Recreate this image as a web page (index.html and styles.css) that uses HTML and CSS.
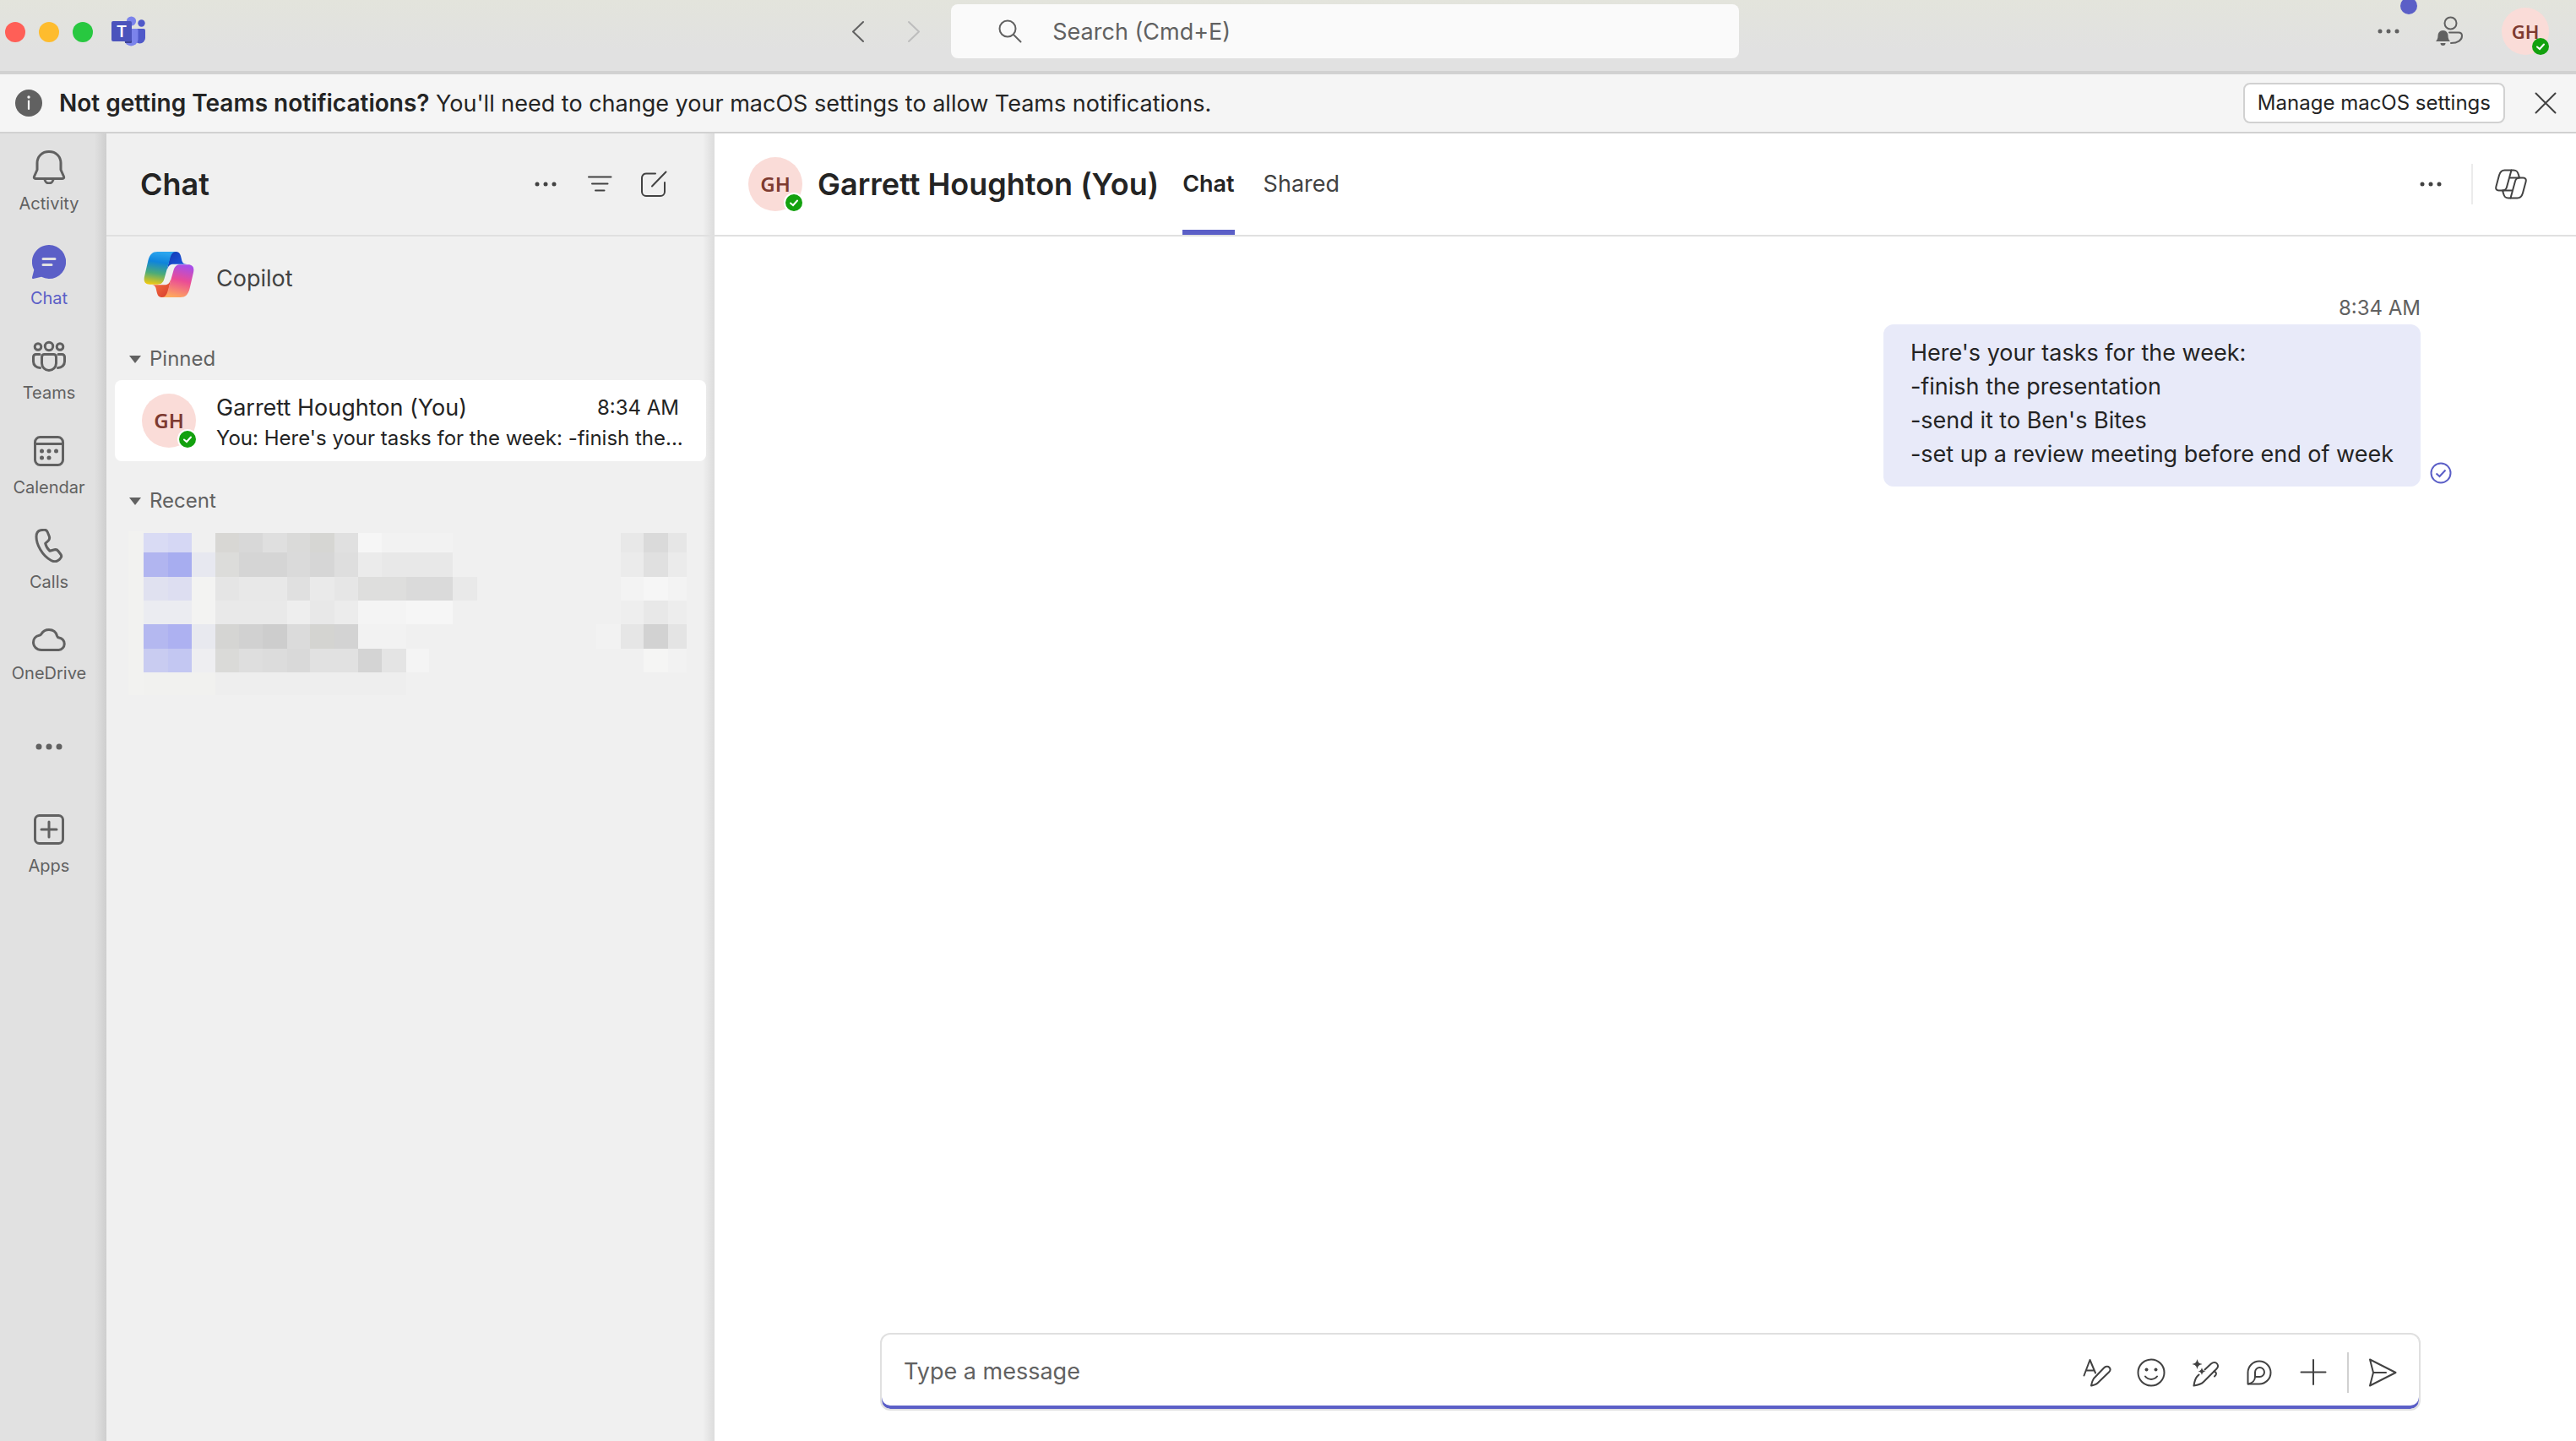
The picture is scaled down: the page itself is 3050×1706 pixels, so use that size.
FILE: index.html
```
<!DOCTYPE html>
<html lang="en">
<head>
    <meta charset="UTF-8">
    <meta name="viewport" content="width=device-width, initial-scale=1.0">
    <title>Chat | Microsoft Teams</title>
    <link rel="stylesheet" href="styles.css">
</head>
<body>

<div class="app">

    <!-- Title bar -->
    <header class="titlebar">
        <div class="titlebar-left">
            <span class="light light-close"></span>
            <span class="light light-min"></span>
            <span class="light light-max"></span>
            <svg class="teams-logo" width="42" height="38" viewBox="0 0 42 38">
                <circle cx="36.500" cy="8.500" r="4.200" fill="#5059c9"/>
                <path d="M28 15h11a2 2 0 0 1 2 2v9a6.500 6.500 0 0 1-13 0z" fill="#5059c9"/>
                <circle cx="24.500" cy="6" r="5.600" fill="#7b83eb"/>
                <path d="M16 15h15a1.500 1.500 0 0 1 1.500 1.500V28a8.300 8.300 0 0 1-16.500 0z" fill="#7b83eb"/>
                <path d="M17 9h8v22a1 1 0 0 1-1 1h-7z" fill="#3d4494"/>
                <rect x="1" y="6" width="24" height="24" rx="2" fill="#4b53bc"/>
                <text class="teams-logo-letter" x="13" y="25" text-anchor="middle">T</text>
            </svg>
        </div>
        <div class="titlebar-center">
            <button class="icon-button" aria-label="Back">
                <svg width="32" height="32" viewBox="0 0 32 32" class="line"><path d="M22 5L10 16.500L22 28"/></svg>
            </button>
            <button class="icon-button disabled" aria-label="Forward">
                <svg width="32" height="32" viewBox="0 0 32 32" class="line"><path d="M10 5L22 16.500L10 28"/></svg>
            </button>
            <label class="search">
                <svg width="28" height="28" viewBox="0 0 28 28" class="line"><circle cx="11" cy="11" r="9.500"/><path d="M18 18L26.500 26.500"/></svg>
                <input type="text" placeholder="Search (Cmd+E)" aria-label="Search">
            </label>
        </div>
        <div class="titlebar-right">
            <button class="icon-button more-button" aria-label="Settings and more">
                <svg width="28" height="8" viewBox="0 0 28 8" fill="currentColor"><circle cx="4" cy="4" r="2.500"/><circle cx="14" cy="4" r="2.500"/><circle cx="24" cy="4" r="2.500"/></svg>
                <span class="update-dot"></span>
            </button>
            <button class="icon-button" aria-label="Notify when available">
                <svg width="32" height="36" viewBox="0 0 32 36" class="line">
                    <circle cx="17.500" cy="8.500" r="7"/>
                    <path d="M16 19.500h11c3 0 4 1.500 4 4c0 5-5 8.500-13 8.500"/>
                    <path class="solid" d="M8.500 17c-4 0-6 3-6 6.500c0 3-1 5-2.500 6.500h17c-1.500-1.500-2.500-3.500-2.500-6.500c0-3.500-2-6.500-6-6.500z"/>
                    <path class="solid" d="M5.500 32h6a3 3 0 0 1-6 0z"/>
                </svg>
            </button>
            <button class="avatar avatar-small" aria-label="Account">
                <span>GH</span>
                <svg class="presence" width="24" height="24" viewBox="0 0 24 24"><circle cx="12" cy="12" r="10"/><path d="M8 12.500L11 15L16 9.500"/></svg>
            </button>
        </div>
    </header>

    <!-- Notification banner -->
    <div class="banner">
        <svg width="32" height="32" viewBox="0 0 32 32"><circle cx="16" cy="16" r="16" fill="#616161"/><circle cx="16" cy="9" r="1.700" fill="#f5f5f5"/><path d="M16 13.500V23" stroke="#f5f5f5" stroke-width="2.200" stroke-linecap="round"/></svg>
        <p><strong>Not getting Teams notifications?</strong> You'll need to change your macOS settings to allow Teams notifications.</p>
        <button class="banner-action">Manage macOS settings</button>
        <button class="icon-button" aria-label="Dismiss">
            <svg width="32" height="32" viewBox="0 0 32 32" class="line"><path d="M4.500 4.500L27.500 27.500M27.500 4.500L4.500 27.500"/></svg>
        </button>
    </div>

    <div class="workspace">

        <!-- App rail -->
        <nav class="rail">
            <a href="#" class="rail-item">
                <svg width="40" height="40" viewBox="0 0 40 40" class="line"><path d="M20 1.500C11.500 1.500 6 7.500 6 15V23L2.500 31C2 32.500 2.500 33.500 4 33.500H36C37.500 33.500 38 32.500 37.500 31L34 23V15C34 7.500 28.500 1.500 20 1.500Z"/><path d="M15 34a5 5 0 0 0 10 0"/></svg>
                <span>Activity</span>
            </a>
            <a href="#" class="rail-item active">
                <svg width="40" height="40" viewBox="0 0 40 40"><path d="M20 0a20 20 0 1 1-9 37.800L1.500 40c-1 .2-1.700-.5-1.500-1.500l2.300-9A20 20 0 0 1 20 0z" fill="#5b5fc7"/><path d="M13 16.500h14M13 23.500h10" stroke="#e1e1e1" stroke-width="3" stroke-linecap="round"/></svg>
                <span>Chat</span>
            </a>
            <a href="#" class="rail-item">
                <svg width="40" height="40" viewBox="0 0 40 40" class="line"><circle cx="20" cy="8" r="4.700"/><circle cx="7" cy="8.500" r="3.800"/><circle cx="33" cy="8.500" r="3.800"/><path d="M14.500 17.500h11a3 3 0 0 1 3 3V28a8.500 8.500 0 0 1-17 0v-7.500a3 3 0 0 1 3-3z"/><path d="M9 17.500H4.500a3 3 0 0 0-3 3V26c0 4.500 3.500 7.500 8 7.500M31 17.500h4.500a3 3 0 0 1 3 3V26c0 4.500-3.500 7.500-8 7.500"/></svg>
                <span>Teams</span>
            </a>
            <a href="#" class="rail-item">
                <svg width="40" height="40" viewBox="0 0 40 40" class="line"><rect x="3.500" y="3.500" width="33" height="33" rx="6"/><path d="M3.500 11.500H36.500"/><g class="dots"><circle cx="11.500" cy="20" r="2.500"/><circle cx="20" cy="20" r="2.500"/><circle cx="28.500" cy="20" r="2.500"/><circle cx="11.500" cy="28" r="2.500"/><circle cx="20" cy="28" r="2.500"/></g></svg>
                <span>Calendar</span>
            </a>
            <a href="#" class="rail-item">
                <svg width="40" height="40" viewBox="0 0 40 40" class="line"><path d="M10 1.800L14 1.200C16 1 17.500 2 18.300 4L20.300 9C21 11 20.700 12.500 19.300 14L15.700 17.300C16.500 20.800 18.500 24 21 26.300L26.500 24.800C28.300 24.300 29.700 24.800 30.800 26.200L33.700 30C35 31.700 35 33.500 33.500 35L32 36.700C29.500 39 26 39.300 22.500 37.500C12 32 5 18.500 5 9.500C5 5 6.500 2.500 10 1.800Z"/></svg>
                <span>Calls</span>
            </a>
            <a href="#" class="rail-item">
                <svg width="40" height="36" viewBox="0 0 40 36" class="line"><path d="M11 31.500H31.500a7.300 7.300 0 0 0 .5-14.500c-1.500-.2-2-.7-2.400-2C28.300 10 24.800 7.500 20 7.500c-4.500 0-7.300 2-9 5c-.7 1.200-1.300 1.600-2.600 1.800C4 15 1.500 18.500 1.500 22.500c0 5 4 9 9.500 9z"/></svg>
                <span>OneDrive</span>
            </a>
            <button class="rail-more" aria-label="More apps">
                <svg width="32" height="8" viewBox="0 0 32 8" fill="currentColor"><circle cx="4" cy="4" r="3.500"/><circle cx="16" cy="4" r="3.500"/><circle cx="28" cy="4" r="3.500"/></svg>
            </button>
            <a href="#" class="rail-item">
                <svg width="40" height="40" viewBox="0 0 40 40" class="line"><rect x="3.500" y="3.500" width="33" height="33" rx="5"/><path d="M20 11V29M11 20H29"/></svg>
                <span>Apps</span>
            </a>
        </nav>

        <!-- Chat list -->
        <aside class="chat-list">
            <div class="list-header">
                <h1>Chat</h1>
                <button class="icon-button" aria-label="More options">
                    <svg width="32" height="32" viewBox="0 0 32 32" fill="currentColor"><circle cx="6" cy="16" r="2.500"/><circle cx="16" cy="16" r="2.500"/><circle cx="26" cy="16" r="2.500"/></svg>
                </button>
                <button class="icon-button" aria-label="Filter">
                    <svg width="32" height="32" viewBox="0 0 32 32" class="line"><path d="M3 7.500H29.500M7 15.500H25.500M11 23.500H21.500"/></svg>
                </button>
                <button class="icon-button" aria-label="New chat">
                    <svg width="32" height="32" viewBox="0 0 32 32" class="line"><path d="M18 3.500H7A5 5 0 0 0 2 8.500V25A5 5 0 0 0 7 30H24A5 5 0 0 0 29 25V14"/><path d="M30.500 1.500L14 18.500"/></svg>
                </button>
            </div>

            <a href="#" class="copilot">
                <svg width="60" height="54" viewBox="0 0 59 54">
                    <defs>
                        <linearGradient id="cool" x1=".4" y1="0" x2=".25" y2="1">
                            <stop offset="0" stop-color="#2aa5ee"/>
                            <stop offset=".3" stop-color="#0f84dc"/>
                            <stop offset=".65" stop-color="#4bab79"/>
                            <stop offset="1" stop-color="#f2c90f"/>
                        </linearGradient>
                        <linearGradient id="warm" x1=".6" y1="0" x2=".35" y2="1">
                            <stop offset="0" stop-color="#a94ee8"/>
                            <stop offset=".45" stop-color="#ea4c96"/>
                            <stop offset="1" stop-color="#ffaa5c"/>
                        </linearGradient>
                        <linearGradient id="navy" x1="0" y1="0" x2="1" y2="1">
                            <stop offset="0" stop-color="#1436b0"/>
                            <stop offset="1" stop-color="#1b62ea"/>
                        </linearGradient>
                        <linearGradient id="ember" x1="0" y1="0" x2="1" y2="1">
                            <stop offset="0" stop-color="#fb7a45"/>
                            <stop offset="1" stop-color="#d63a2c"/>
                        </linearGradient>
                    </defs>
                    <path fill="url(#navy)" d="M32 0H38C42.500 0 43.500 4 44.500 9C45.300 13 46.500 14.700 51 14.700H35C31 14.700 29 16 27 22Z"/>
                    <path fill="url(#cool)" d="M16 0H38C34 0 32 3 30.500 9L24 32C22.500 37 20 38.700 16 38.700H7C1 38.700-.8 35 .6 29L5 10C7 3 10 0 16 0Z"/>
                    <path fill="url(#ember)" d="M27 54H21C16.500 54 15.500 50 14.500 45C13.700 41 12.500 39.300 8 39.300H24C28 39.300 30 38 32 32Z"/>
                    <path fill="url(#warm)" d="M43 54H21C25 54 27 51 28.500 45L35 22C36.500 17 39 15.300 43 15.300H52C58 15.300 59.800 19 58.400 25L54 44C52 51 49 54 43 54Z"/>
                </svg>
                <span>Copilot</span>
            </a>

            <h2 class="section-title"><span class="caret"></span>Pinned</h2>
            <a href="#" class="chat-item">
                <div class="avatar">
                    <span>GH</span>
                    <svg class="presence" width="24" height="24" viewBox="0 0 24 24"><circle class="ring" cx="12" cy="12" r="12"/><circle cx="12" cy="12" r="10"/><path d="M8 12.500L11 15L16 9.500"/></svg>
                </div>
                <div class="chat-text">
                    <div class="chat-top">
                        <span class="chat-name">Garrett Houghton (You)</span>
                        <time>8:34 AM</time>
                    </div>
                    <div class="chat-preview">You: Here's your tasks for the week: -finish the...</div>
                </div>
            </a>

            <h2 class="section-title recent-title"><span class="caret"></span>Recent</h2>
            <!-- Redacted conversations -->
            <svg class="redacted" width="661" height="196" viewBox="0 0 664 196" preserveAspectRatio="none" shape-rendering="crispEdges">
                <rect x="0" y="0" width="18" height="194" fill="#f2f2f0"/>
                <g>
                    <rect x="18" y="2" width="29" height="23" fill="#d9dbf4"/><rect x="47" y="2" width="28" height="23" fill="#d5d7f4"/>
                    <rect x="18" y="25" width="29" height="29" fill="#b1b5f0"/><rect x="47" y="25" width="28" height="29" fill="#a7adf0"/><rect x="75" y="25" width="28" height="29" fill="#e7e8f0"/>
                    <rect x="18" y="54" width="29" height="28" fill="#e0e1f0"/><rect x="47" y="54" width="28" height="28" fill="#dddef1"/><rect x="75" y="54" width="28" height="56" fill="#f3f3f2"/>
                    <rect x="18" y="82" width="57" height="28" fill="#ebecf1"/>
                    <rect x="18" y="110" width="29" height="29" fill="#b4b8f0"/><rect x="47" y="110" width="28" height="29" fill="#adb1f1"/><rect x="75" y="110" width="28" height="29" fill="#e8e9ef"/>
                    <rect x="18" y="139" width="29" height="28" fill="#c9ccf1"/><rect x="47" y="139" width="28" height="28" fill="#c3c7f2"/><rect x="75" y="139" width="28" height="28" fill="#eeeef1"/>
                    <rect x="18" y="167" width="85" height="27" fill="#f1f1ef"/>
                </g>
                <g>
                    <rect x="103" y="2" width="29" height="23" fill="#d8d7d4"/><rect x="132" y="2" width="28" height="23" fill="#d8d8d8"/><rect x="160" y="2" width="29" height="23" fill="#dfdfdf"/><rect x="189" y="2" width="27" height="23" fill="#dadad9"/><rect x="216" y="2" width="29" height="23" fill="#d6d6d3"/><rect x="245" y="2" width="28" height="23" fill="#e0e0e0"/><rect x="273" y="2" width="28" height="23" fill="#f6f6f6"/><rect x="301" y="2" width="85" height="23" fill="#f2f2f2"/>
                    <rect x="103" y="25" width="29" height="29" fill="#dcdcda"/><rect x="132" y="25" width="57" height="29" fill="#d5d5d5"/><rect x="189" y="25" width="27" height="29" fill="#dadada"/><rect x="216" y="25" width="29" height="29" fill="#d6d6d6"/><rect x="245" y="25" width="28" height="29" fill="#dedede"/><rect x="273" y="25" width="28" height="29" fill="#ebebeb"/><rect x="301" y="25" width="85" height="29" fill="#e8e8e8"/>
                    <rect x="103" y="54" width="29" height="28" fill="#e5e5e5"/><rect x="132" y="54" width="57" height="28" fill="#e8e8e8"/><rect x="189" y="54" width="27" height="28" fill="#e0e0e0"/><rect x="216" y="54" width="29" height="28" fill="#eaeaea"/><rect x="245" y="54" width="28" height="28" fill="#e6e6e6"/><rect x="273" y="54" width="57" height="28" fill="#dededd"/><rect x="330" y="54" width="56" height="28" fill="#dadada"/><rect x="386" y="54" width="29" height="28" fill="#e9e9e9"/>
                    <rect x="103" y="82" width="86" height="28" fill="#e9e9e9"/><rect x="189" y="82" width="27" height="28" fill="#eeeeee"/><rect x="216" y="82" width="29" height="28" fill="#e8e8e8"/><rect x="245" y="82" width="28" height="28" fill="#ececec"/><rect x="273" y="82" width="57" height="28" fill="#f4f4f4"/><rect x="330" y="82" width="56" height="28" fill="#f6f6f6"/>
                    <rect x="103" y="110" width="29" height="29" fill="#d5d5d3"/><rect x="132" y="110" width="28" height="29" fill="#d1d1d1"/><rect x="160" y="110" width="29" height="29" fill="#cdcdcd"/><rect x="189" y="110" width="27" height="29" fill="#dbdbdb"/><rect x="216" y="110" width="29" height="29" fill="#d4d4d1"/><rect x="245" y="110" width="28" height="29" fill="#d3d3d3"/><rect x="273" y="110" width="57" height="29" fill="#f2f2f2"/>
                    <rect x="103" y="139" width="29" height="28" fill="#dadad8"/><rect x="132" y="139" width="28" height="28" fill="#dedede"/><rect x="160" y="139" width="29" height="28" fill="#dcdcdc"/><rect x="189" y="139" width="27" height="28" fill="#d9d9d9"/><rect x="216" y="139" width="57" height="28" fill="#e1e1e1"/><rect x="273" y="139" width="28" height="28" fill="#d4d4d4"/><rect x="301" y="139" width="29" height="28" fill="#e4e4e4"/><rect x="330" y="139" width="28" height="28" fill="#f4f4f4"/>
                    <rect x="103" y="167" width="227" height="27" fill="#eeeeee"/>
                </g>
                <g>
                    <rect x="586" y="2" width="27" height="23" fill="#e8e8e8"/><rect x="613" y="2" width="29" height="23" fill="#dadada"/><rect x="642" y="2" width="22" height="23" fill="#e6e6e6"/>
                    <rect x="586" y="25" width="27" height="29" fill="#ebebeb"/><rect x="613" y="25" width="29" height="29" fill="#e0e0e0"/><rect x="642" y="25" width="22" height="29" fill="#ebebeb"/>
                    <rect x="586" y="54" width="27" height="28" fill="#f3f3f3"/><rect x="613" y="54" width="29" height="28" fill="#f6f6f6"/><rect x="642" y="54" width="22" height="28" fill="#f3f3f3"/>
                    <rect x="586" y="82" width="27" height="28" fill="#eeeeee"/><rect x="613" y="82" width="29" height="28" fill="#e8e8e8"/><rect x="642" y="82" width="22" height="28" fill="#ededed"/>
                    <rect x="557" y="110" width="29" height="29" fill="#f2f2f2"/><rect x="586" y="110" width="27" height="29" fill="#e6e6e6"/><rect x="613" y="110" width="29" height="29" fill="#d2d2d2"/><rect x="642" y="110" width="22" height="29" fill="#e4e4e4"/>
                    <rect x="613" y="139" width="29" height="28" fill="#f5f5f4"/><rect x="642" y="139" width="22" height="28" fill="#f2f2f2"/>
                </g>
            </svg>
        </aside>

        <!-- Conversation -->
        <main class="conversation">
            <div class="conversation-header">
                <div class="avatar">
                    <span>GH</span>
                    <svg class="presence" width="24" height="24" viewBox="0 0 24 24"><circle class="ring" cx="12" cy="12" r="12"/><circle cx="12" cy="12" r="10"/><path d="M8 12.500L11 15L16 9.500"/></svg>
                </div>
                <h2>Garrett Houghton (You)</h2>
                <div class="tabs">
                    <button class="tab active">Chat</button>
                    <button class="tab">Shared</button>
                </div>
                <button class="icon-button" aria-label="More chat options">
                    <svg width="32" height="32" viewBox="0 0 32 32" fill="currentColor"><circle cx="6" cy="16" r="2.500"/><circle cx="16" cy="16" r="2.500"/><circle cx="26" cy="16" r="2.500"/></svg>
                </button>
                <span class="divider"></span>
                <button class="icon-button" aria-label="Open Copilot">
                    <svg width="38" height="36" viewBox="0 0 38 36" class="line">
                        <path d="M11.500 1.500H19.500L14 21.500C13.300 24.200 12 25.500 9 25.500H4.500C1.500 25.500 .7 23.300 1.500 20.500L5 7.500C6.200 3.200 8 1.500 11.500 1.500Z"/>
                        <path d="M19.500 1.500H22C26 1.500 27 3.500 28 7L29 10.500M18 10.500H29"/>
                        <path d="M26.500 34.500H18.500L24 14.500C24.700 11.800 26 10.500 29 10.500H33.500C36.500 10.500 37.300 12.700 36.500 15.500L33 28.500C31.800 32.800 30 34.500 26.500 34.500Z"/>
                        <path d="M18.500 34.500H16C12 34.500 11 32.500 10 29L9 25.500H20"/>
                    </svg>
                </button>
            </div>

            <div class="messages">
                <div class="message">
                    <time>8:34 AM</time>
                    <div class="bubble">
                        <p>Here's your tasks for the week:</p>
                        <p>-finish the presentation</p>
                        <p>-send it to Ben's Bites</p>
                        <p>-set up a review meeting before end of week</p>
                    </div>
                    <svg class="sent" width="26" height="26" viewBox="0 0 26 26"><circle cx="13" cy="13" r="11.500"/><path d="M7.500 13.500L11.500 17L18.500 9.500"/></svg>
                </div>
            </div>

            <div class="composer">
                <input type="text" placeholder="Type a message" aria-label="Type a message">
                <button class="icon-button" aria-label="Format">
                    <svg width="34" height="34" viewBox="0 0 34 34" class="line"><path d="M1.500 20.500L8.500 2L15 17.500M4 14.500H13"/><path d="M25 11.500C27 9.500 30 9.300 31.500 11C33 12.700 32.500 15 31 16.500L17.500 29.500C15.500 31.500 12.500 32 10 32.500C10.500 30 11 27 13 24Z"/></svg>
                </button>
                <button class="icon-button" aria-label="Emoji">
                    <svg width="34" height="34" viewBox="0 0 34 34" class="line"><circle cx="17" cy="17" r="15.500"/><path d="M10 21.500C13.500 26 20.500 26 24 21.500"/><g class="dots"><circle cx="11.500" cy="13.500" r="2"/><circle cx="22.500" cy="13.500" r="2"/></g></svg>
                </button>
                <button class="icon-button" aria-label="Rewrite with Copilot">
                    <svg width="34" height="34" viewBox="0 0 34 34" class="line"><path class="solid" d="M7.500 1C8.500 5 9.500 6 13.500 7C9.500 8 8.500 9 7.500 13C6.500 9 5.500 8 1.500 7C5.500 6 6.500 5 7.500 1Z"/><path class="solid" d="M13 11C13.700 14 14.500 14.800 17.500 15.500C14.500 16.200 13.700 17 13 20C12.300 17 11.500 16.200 8.500 15.500C11.500 14.800 12.300 14 13 11Z"/><path d="M16.500 13.500L24 6.500C26.500 4.500 29.500 4.500 31 6.500C32.500 8.500 32 11 30.500 12.500L15 28C12 31 7 32 3.500 32.500C4 29 4.500 25 7.500 21.500L9.500 19.500"/><path d="M27.500 15.500C31 17 30.500 19 28 21.500"/></svg>
                </button>
                <button class="icon-button" aria-label="Loop components">
                    <svg width="34" height="34" viewBox="0 0 34 34" class="line"><path d="M3.500 17A13.500 13.500 0 1 1 17 30.500H3.500Z"/><path d="M12 22V16.500A5.500 5.500 0 1 1 17.500 22H12C12 26 9 29.500 4 30.500"/></svg>
                </button>
                <button class="icon-button" aria-label="Attach">
                    <svg width="34" height="34" viewBox="0 0 34 34" class="line"><path d="M17 2V31M2.500 16.500H31.500"/></svg>
                </button>
                <span class="divider"></span>
                <button class="icon-button" aria-label="Send">
                    <svg width="34" height="34" viewBox="0 0 34 34" class="line"><path d="M2 1.500L32.500 17L2 32.500L6 17Z"/><path d="M6 17H21"/></svg>
                </button>
            </div>
        </main>
    </div>
</div>

</body>
</html>
```
FILE: styles.css
```
* {
    box-sizing: border-box;
}

body {
    margin: 0;
    font-family: Inter, "Liberation Sans", sans-serif;
    font-size: 27px;
    line-height: 40px;
    color: #242424;
    background-color: #ffffff;
}

h1, h2, p {
    margin: 0;
}

a {
    color: inherit;
    text-decoration: none;
}

button, input {
    font: inherit;
    color: inherit;
    border: none;
    background: none;
    padding: 0;
}

input {
    outline: none;
    min-width: 0;
}

input::placeholder {
    color: #616161;
    opacity: 1;
}

svg {
    display: block;
    flex: none;
}

/* Icons */
.line {
    fill: none;
    stroke: currentColor;
    stroke-width: 2;
    stroke-linecap: round;
    stroke-linejoin: round;
}

.dots, .solid {
    fill: currentColor;
    stroke: none;
}

.icon-button {
    display: flex;
    align-items: center;
    justify-content: center;
    color: #424242;
    cursor: pointer;
}

.divider {
    width: 2px;
    height: 48px;
    background-color: #ebebeb;
}

.avatar {
    position: relative;
    display: flex;
    align-items: center;
    justify-content: center;
    flex: none;
    width: 64px;
    height: 64px;
    border-radius: 50%;
    background-color: #fadcd8;
    color: #7d3a30;
    font-family: "Noto Sans", sans-serif;
    font-size: 24px;
    font-weight: 600;
    line-height: 32px;
}

.avatar-small {
    width: 56px;
    height: 56px;
    font-size: 22px;
}

.presence {
    position: absolute;
    right: -2px;
    bottom: -2px;
    fill: #13a10e;
}

.presence .ring {
    fill: #ffffff;
}

.presence path {
    fill: none;
    stroke: #ffffff;
    stroke-width: 2;
    stroke-linecap: round;
}

.app {
    display: flex;
    flex-direction: column;
    height: 100vh;
}

/* Title bar */
.titlebar {
    display: grid;
    grid-template-columns: 1fr 35% 1fr;
    align-items: start;
    height: 88px;
    padding-top: 5px;
    border-bottom: 4px solid #d1d1d1;
    background: linear-gradient(#e3e4dc, #e1e1e1 60px);
}

.titlebar-left {
    display: flex;
    align-items: center;
    gap: 16px;
    height: 66px;
    padding-left: 6px;
}

.light {
    width: 24px;
    height: 24px;
    border-radius: 50%;
}

.light-close {
    background-color: #ff5f57;
}

.light-min {
    background-color: #febc2e;
}

.light-max {
    background-color: #28c840;
}

.teams-logo {
    margin-left: 5px;
}

.teams-logo-letter {
    font-size: 19px;
    font-weight: 600;
    fill: #ffffff;
}

.titlebar-center {
    display: flex;
    align-items: center;
    gap: 22px;
    height: 64px;
    padding-left: 3px;
}

.titlebar-center .icon-button {
    width: 44px;
    color: #616161;
}

.titlebar-center .disabled {
    color: #bdbdbd;
}

.search {
    display: flex;
    align-items: center;
    gap: 36px;
    flex: 1;
    height: 64px;
    padding-left: 56px;
    border-radius: 8px;
    background-color: #fafafa;
    color: #616161;
}

.search input {
    flex: 1;
    padding-top: 2px;
}

.titlebar-right {
    display: flex;
    align-items: center;
    justify-content: flex-end;
    gap: 42px;
    height: 64px;
    padding-right: 32px;
}

.titlebar-right .icon-button {
    color: #616161;
}

.titlebar-right .avatar {
    margin-left: 4px;
}

.more-button {
    position: relative;
}

.update-dot {
    position: absolute;
    top: -36px;
    right: -20px;
    width: 20px;
    height: 20px;
    border-radius: 50%;
    background-color: #5b5fc7;
}

/* Notification banner */
.banner {
    display: flex;
    align-items: center;
    height: 70px;
    padding: 0 20px 0 18px;
    border-bottom: 2px solid #d1d1d1;
    background-color: #f5f5f5;
}

.banner p {
    flex: 1;
    margin-left: 20px;
}

.banner strong {
    font-size: 28px;
    font-weight: 600;
}

.banner-action {
    height: 48px;
    margin-right: 32px;
    padding: 0 15px;
    border: 2px solid #d1d1d1;
    border-radius: 8px;
    background-color: #ffffff;
    font-size: 24px;
}

.workspace {
    display: flex;
    flex: 1;
    min-height: 0;
}

/* App rail */
.rail {
    display: flex;
    flex-direction: column;
    flex: none;
    width: 126px;
    padding-right: 10px;
    background: linear-gradient(to left, #cecece, #e1e1e1 14px);
    color: #616161;
}

.rail-item {
    display: flex;
    flex-direction: column;
    align-items: center;
    gap: 11px;
    padding: 20px 0 17px;
    font-size: 20px;
    line-height: 24px;
}

.rail-item .line {
    stroke-width: 3;
}

.rail-item.active {
    color: #5b5fc7;
}

.rail-more {
    display: flex;
    align-items: center;
    justify-content: center;
    height: 116px;
}

/* Chat list */
.chat-list {
    flex: none;
    width: 720px;
    background: linear-gradient(to left, #dcdcdc, #f0f0f0 14px);
}

.list-header {
    display: flex;
    align-items: center;
    gap: 32px;
    height: 122px;
    padding: 0 56px 0 40px;
    border-bottom: 2px solid #e0e0e0;
}

.list-header h1 {
    flex: 1;
    font-size: 36px;
    font-weight: 600;
}

.copilot {
    display: flex;
    align-items: center;
    gap: 26px;
    height: 100px;
    padding-left: 44px;
    color: #424242;
}

.copilot svg {
    margin-bottom: 10px;
}

.section-title {
    display: flex;
    align-items: center;
    gap: 10px;
    height: 40px;
    margin-top: 25px;
    padding-left: 27px;
    font-size: 24px;
    font-weight: 400;
    color: #616161;
}

.caret {
    border: 7px solid transparent;
    border-top: 9px solid #616161;
    border-bottom: none;
}

.chat-item {
    display: flex;
    align-items: center;
    gap: 24px;
    margin: 5px 10px 0 10px;
    padding: 10px 32px;
    border-radius: 8px;
    background-color: #ffffff;
}

.chat-text {
    flex: 1;
    min-width: 0;
}

.chat-top {
    display: flex;
    align-items: center;
    justify-content: space-between;
    padding-top: 4px;
    line-height: 38px;
}

.chat-top time {
    font-size: 24px;
}

.chat-preview {
    font-size: 24px;
    line-height: 34px;
    white-space: nowrap;
}

.recent-title {
    margin-top: 27px;
}

.redacted {
    margin: 16px 0 0 26px;
}

/* Conversation */
.conversation {
    display: flex;
    flex-direction: column;
    flex: 1;
    min-width: 0;
    background-color: #ffffff;
}

.conversation-header {
    display: flex;
    align-items: center;
    height: 122px;
    padding: 0 58px 0 40px;
    border-bottom: 2px solid #e0e0e0;
}

.conversation-header h2 {
    margin-left: 18px;
    font-size: 36px;
    font-weight: 600;
}

.conversation-header .divider {
    margin: 0 26px 0 32px;
}

.tabs {
    display: flex;
    flex: 1;
    gap: 34px;
    height: 120px;
    margin-left: 28px;
}

.tab {
    border-top: 6px solid transparent;
    border-bottom: 6px solid transparent;
    color: #424242;
}

.tab.active {
    border-bottom-color: #5b5fc7;
    font-weight: 600;
    color: #242424;
}

.messages {
    flex: 1;
    padding: 66px 184px 0 196px;
}

.message {
    position: relative;
    display: flex;
    flex-direction: column;
    align-items: flex-end;
}

.message time {
    font-size: 24px;
    line-height: 38px;
    color: #616161;
}

.bubble {
    padding: 14px 32px 18px;
    border-radius: 12px;
    background-color: #e8eaf9;
}

.sent {
    position: absolute;
    right: -37px;
    bottom: 3px;
    fill: none;
    stroke: #5b5fc7;
    stroke-width: 2;
}

.composer {
    display: flex;
    align-items: center;
    gap: 30px;
    height: 92px;
    margin: 0 184px 36px 196px;
    padding: 2px 26px 0 26px;
    border: 2px solid #e0e0e0;
    border-radius: 12px;
    box-shadow: inset 0 -4px 0 #5b5fc7;
}

.composer input {
    flex: 1;
    padding-bottom: 2px;
}

.composer .divider {
    margin: 0 -7px;
    background-color: #d1d1d1;
}
```
